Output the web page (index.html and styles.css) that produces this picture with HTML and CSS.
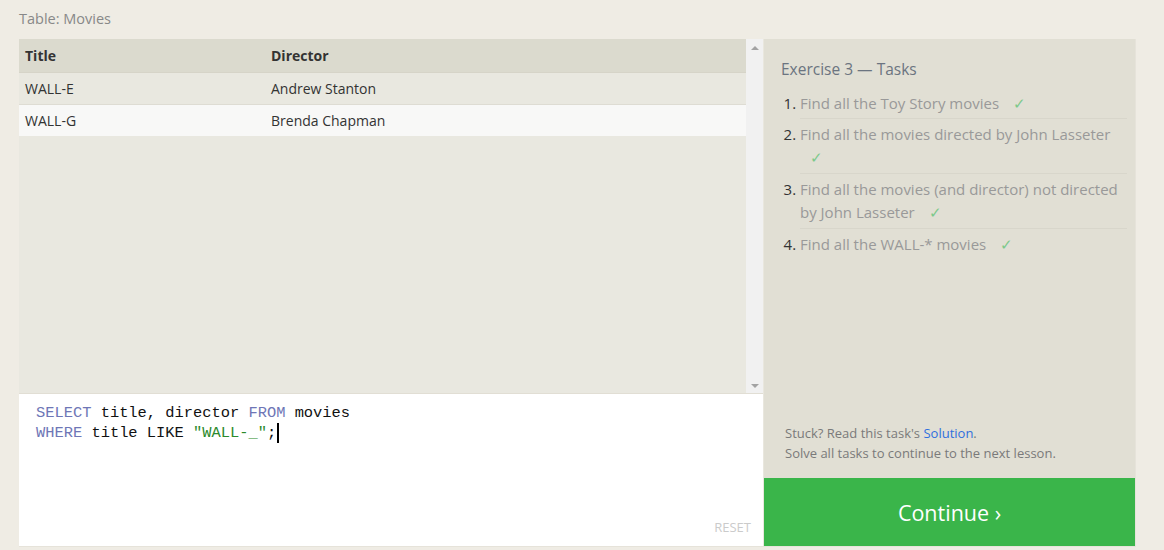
FILE: index.html
```
<!DOCTYPE html>
<html>
<head>
<meta charset="utf-8">
<link rel="stylesheet" href="styles.css">
</head>
<body>
<div class="caption">Table: Movies</div>
<div class="workspace">
  <div class="left">
    <div class="results">
      <div class="table-wrap">
        <table class="grid">
          <thead><tr><th class="c1">Title</th><th>Director</th></tr></thead>
          <tbody>
            <tr class="odd"><td class="c1">WALL-E</td><td>Andrew Stanton</td></tr>
            <tr class="even"><td class="c1">WALL-G</td><td>Brenda Chapman</td></tr>
          </tbody>
        </table>
      </div>
      <div class="scrollbar">
        <span class="arrow up"></span>
        <span class="arrow down"></span>
      </div>
    </div>
    <div class="editor">
      <div class="code"><span class="kw">SELECT</span> title, director <span class="kw">FROM</span> movies</div>
      <div class="code"><span class="kw">WHERE</span> title LIKE <span class="str">"WALL-_"</span>;<span class="cursor"></span></div>
      <div class="reset">RESET</div>
    </div>
  </div>
  <div class="right">
    <div class="tasks">
      <div class="ex-title">Exercise 3 — Tasks</div>
      <ol class="task-list">
        <li class="first"><span class="t">Find all the Toy Story movies <span class="check">✓</span></span></li>
        <li><span class="t">Find all the movies directed by John Lasseter <span class="check">✓</span></span></li>
        <li><span class="t">Find all the movies (and director) not directed by John Lasseter <span class="check">✓</span></span></li>
        <li class="last"><span class="t">Find all the WALL-* movies <span class="check">✓</span></span></li>
      </ol>
      <div class="hint">
        <div>Stuck? Read this task's <a class="link">Solution</a>.</div>
        <div>Solve all tasks to continue to the next lesson.</div>
      </div>
    </div>
    <div class="continue">Continue ›</div>
  </div>
</div>
</body>
</html>
```
FILE: styles.css
```
html, body {
  margin: 0;
  padding: 0;
}
body {
  background: #efece4;
  font-family: "Open Sans", "Liberation Sans", sans-serif;
  width: 1164px;
  height: 550px;
  overflow: hidden;
}
.caption {
  padding: 8px 0 0 19px;
  height: 22px;
  font-size: 14.5px;
  line-height: 22px;
  color: #888;
}
.workspace {
  margin: 9px 0 0 19px;
  width: 1116px;
  height: 507px;
  border: 1px solid #e6e3da;
  border-left: 0;
  border-top: 0;
  display: flex;
}
.left {
  width: 744px;
  display: flex;
  flex-direction: column;
  border-right: 1px solid #e9e7de;
}
.results {
  height: 354px;
  display: flex;
  background: #e9e8e0;
  border-bottom: 1px solid #e1ded4;
}
.table-wrap {
  flex: 1;
}
.grid {
  width: 100%;
  border-collapse: collapse;
  font-size: 14px;
  color: #333;
}
.grid th {
  text-align: left;
  font-weight: 700;
  background: #dbdace;
  height: 33px;
  padding: 0 0 0 6px;
  border-bottom: 1px solid #d6d4c8;
}
.grid td {
  height: 31px;
  padding: 0 0 0 6px;
  border-bottom: 1px solid #dedcd3;
}
.grid .c1 {
  width: 240px;
}
.grid .odd td {
  background: #e9e8e0;
}
.grid .even td {
  background: #f8f8f7;
  border-bottom: 0;
}
.scrollbar {
  width: 17px;
  background: #f1f1f1;
  display: flex;
  flex-direction: column;
  justify-content: space-between;
  align-items: center;
  padding: 7px 0 5px;
  box-sizing: border-box;
}
.arrow {
  width: 0;
  height: 0;
  border-left: 4px solid transparent;
  border-right: 4px solid transparent;
}
.arrow.up {
  border-bottom: 4px solid #a3a3a3;
}
.arrow.down {
  border-top: 4px solid #a3a3a3;
}
.editor {
  flex: 1;
  background: #fff;
  padding: 9px 0 0 17px;
  position: relative;
  font-family: "Liberation Mono", "DejaVu Sans Mono", monospace;
  font-size: 15.4px;
  line-height: 20px;
  color: #111;
}
.code {
  white-space: pre;
}
.kw {
  color: #6e76b6;
}
.str {
  color: #2b8a2b;
}
.cursor {
  display: inline-block;
  width: 2px;
  height: 20px;
  background: #000;
  vertical-align: top;
  margin-left: 1px;
}
.reset {
  position: absolute;
  right: 12px;
  bottom: 10px;
  font-family: "Open Sans", "Liberation Sans", sans-serif;
  font-size: 13px;
  color: #cbcbcb;
  line-height: 18px;
}
.right {
  flex: 1;
  display: flex;
  flex-direction: column;
}
.tasks {
  flex: 1;
  background: #e1dfd4;
  padding: 19px 8px 0 17px;
  display: flex;
  flex-direction: column;
}
.ex-title {
  font-size: 15.5px;
  color: #6b7480;
  line-height: 22px;
}
.task-list {
  margin: 8px 0 0 0;
  padding: 0 0 0 19px;
  font-size: 15px;
  line-height: 23px;
}
.task-list li {
  color: #333;
  padding: 4px 0 4px 0;
  border-bottom: 1px solid #d8d6cb;
}
.task-list li.first {
  padding-bottom: 3px;
}
.task-list li.last {
  border-bottom: 0;
}
.task-list li::marker {
  color: #333;
}
.t {
  color: #999;
}
.check {
  color: #7cc98b;
  margin-left: 10px;
}
.hint {
  margin-top: auto;
  margin-bottom: 15px;
  font-size: 13px;
  line-height: 20px;
  color: #7a7a7a;
  padding-left: 4px;
}
.link {
  color: #2f6fde;
}
.continue {
  height: 68px;
  background: #3ab54a;
  color: #fff;
  font-size: 21.5px;
  display: flex;
  align-items: center;
  justify-content: center;
}
```
